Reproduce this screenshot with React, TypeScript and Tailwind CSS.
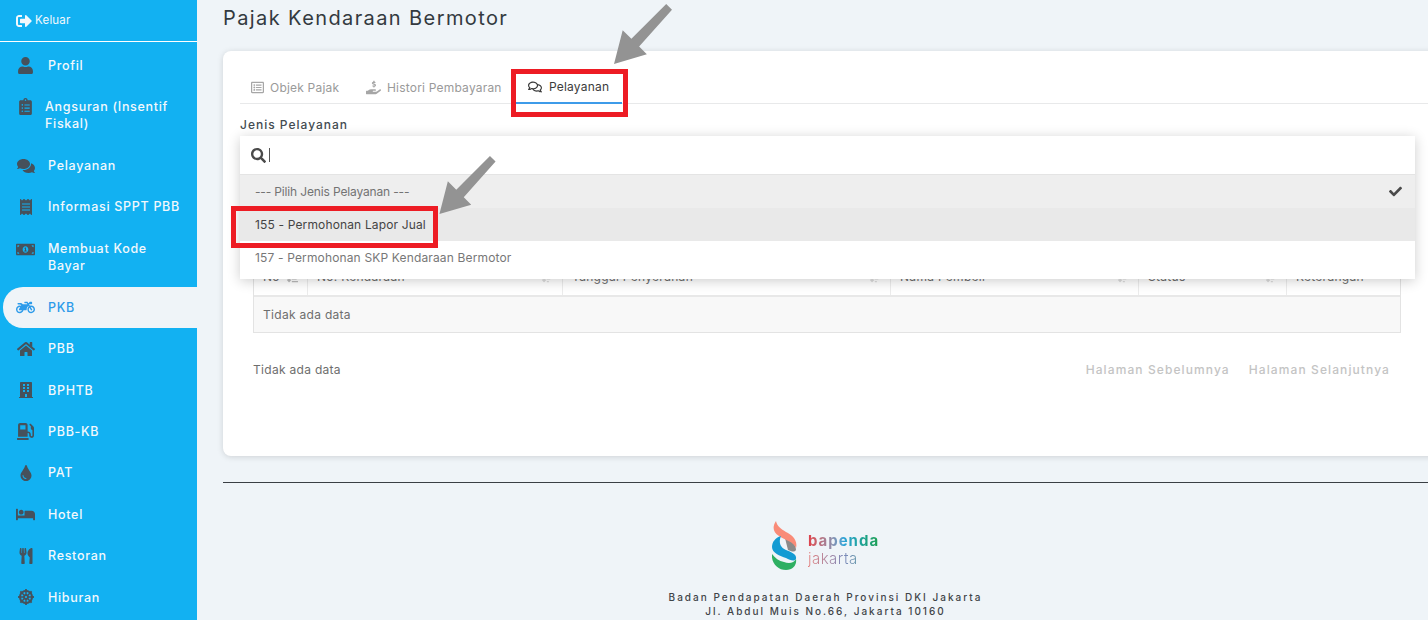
import {
  FaSignOutAlt,
  FaUser,
  FaClipboardList,
  FaComments,
  FaReceipt,
  FaMoneyBillAlt,
  FaMotorcycle,
  FaHome,
  FaBuilding,
  FaGasPump,
  FaTint,
  FaBed,
  FaUtensils,
  FaDharmachakra,
  FaRegListAlt,
  FaHandHoldingUsd,
  FaRegComments,
  FaSearch,
  FaCheck,
  FaSortAmountDownAlt,
  FaSortAmountDown,
} from 'react-icons/fa';

const menu = [
  { label: 'Profil', icon: FaUser, size: 17 },
  { label: 'Angsuran (Insentif Fiskal)', icon: FaClipboardList, size: 17, tall: true, nudge: true },
  { label: 'Pelayanan', icon: FaComments, size: 18 },
  { label: 'Informasi SPPT PBB', icon: FaReceipt, size: 16 },
  { label: 'Membuat Kode Bayar', icon: FaMoneyBillAlt, size: 19, tall: true },
  { label: 'PKB', icon: FaMotorcycle, size: 19, active: true },
  { label: 'PBB', icon: FaHome, size: 18 },
  { label: 'BPHTB', icon: FaBuilding, size: 16 },
  { label: 'PBB-KB', icon: FaGasPump, size: 17 },
  { label: 'PAT', icon: FaTint, size: 16 },
  { label: 'Hotel', icon: FaBed, size: 19 },
  { label: 'Restoran', icon: FaUtensils, size: 16 },
  { label: 'Hiburan', icon: FaDharmachakra, size: 16 },
];

const columns = [
  { label: 'No', w: 'w-[54px]', first: true },
  { label: 'No. Kendaraan', w: 'w-[255px]' },
  { label: 'Tanggal Penyerahan', w: 'w-[328px]' },
  { label: 'Nama Pembeli', w: 'w-[248px]' },
  { label: 'Status', w: 'w-[148px]' },
  { label: 'Keterangan', w: 'flex-1' },
];

function Arrow({ className }: { className: string }) {
  return (
    <svg className={className} viewBox="0 0 60 62" fill="#939393">
      <path d="M54 0 L60 6 L26 44 L34 52 L0 62 L9 27 L18 36 Z" />
    </svg>
  );
}

function Sidebar() {
  return (
    <aside className="w-[197px] h-full shrink-0 bg-[#12b1f2] text-[#f2f8fc]">
      <div className="h-[42px] pl-4 flex items-center gap-[3px] border-b border-white text-[11.5px] tracking-[0.2px]">
        <FaSignOutAlt size={16} />
        <span>Keluar</span>
      </div>
      <nav className="pt-[2.5px]">
        {menu.map((m) => {
          const Icon = m.icon;
          return (
            <div
              key={m.label}
              className={`${m.tall ? 'h-[59px]' : 'h-[41.4px]'} flex items-center ml-[3px] rounded-l-[20px] ${m.active ? 'bg-[#eff4f8] text-[#2d9bea]' : ''}`}
            >
              <div
                className={`w-[45px] flex justify-center shrink-0 ${m.tall ? 'self-start mt-[12px]' : ''} ${m.active ? 'text-[#2d9bea]' : 'text-[#46515b]'}`}
              >
                <Icon size={m.size} />
              </div>
              <span className={`max-w-[136px] text-[12.5px] font-medium tracking-[0.7px] leading-[17px] ${m.nudge ? '-ml-[3px]' : ''}`}>
                {m.label}
              </span>
            </div>
          );
        })}
      </nav>
    </aside>
  );
}

function Tabs() {
  return (
    <div className="flex h-[38px] border-b border-[#e8e9ea] text-[12px] tracking-[0.2px] text-[#9a9a9a]">
      <div className="flex items-center gap-[6px] pt-[6px] pl-[11px] w-[114px]">
        <FaRegListAlt size={13} className="text-[#a6a6a6]" />
        <span>Objek Pajak</span>
      </div>
      <div className="flex items-center gap-[6px] pt-[6px] pl-[12px] w-[162px]">
        <FaHandHoldingUsd size={15} className="text-[#a6a6a6]" />
        <span>Histori Pembayaran</span>
      </div>
      <div className="flex items-center gap-[7px] pt-[6px] pl-[12px] w-[106px] border-b-2 border-[#3d9be9] h-[38px] text-[#3c3c3c]">
        <FaRegComments size={14} />
        <span>Pelayanan</span>
      </div>
    </div>
  );
}

function Table() {
  return (
    <div className="border border-[#e3e3e3] ml-[13px] w-[1148px] text-[12px] tracking-[0.3px] text-[#6e6e6e]">
      <div className="flex h-[40px] border-b-2 border-[#e8e8e8]">
        {columns.map((c) => (
          <div key={c.label} className={`${c.w} flex items-center justify-between pt-[2px] px-[9px] border-r border-[#ececec] last:border-r-0`}>
            <span>{c.label}</span>
            {c.first ? (
              <FaSortAmountDownAlt size={11} className="text-[#bbbbbb]" />
            ) : c.label !== 'Keterangan' ? (
              <FaSortAmountDown size={11} className="text-[#dddddd]" />
            ) : null}
          </div>
        ))}
      </div>
      <div className="h-[35px] pl-[9px] flex items-center bg-[#f8f8f8]">Tidak ada data</div>
    </div>
  );
}

function Dropdown() {
  return (
    <div className="absolute left-[17px] top-[85px] w-[1175px] bg-white shadow-[0_2px_12px_rgba(0,0,0,0.2)] text-[12px] tracking-[0.15px] z-10">
      <div className="h-[39px] flex items-center pl-[11px] gap-[3px] border-b border-[#e4e4e4]">
        <FaSearch size={15} className="text-[#4a4a4a]" />
        <div className="w-px h-[14px] bg-[#555555]" />
      </div>
      <div className="h-[33px] flex items-center justify-between pl-[15px] pr-[13px] bg-[#eeeeee] text-[#737373]">
        <span className="tracking-[-0.15px]">--- Pilih Jenis Pelayanan ---</span>
        <FaCheck size={13} className="text-[#4a4a4a]" />
      </div>
      <div className="h-[33px] flex items-center pl-[15px] bg-[#e9e9e9] text-[#444444]">155 - Permohonan Lapor Jual</div>
      <div className="h-[38px] pb-[4px] flex items-center pl-[15px] text-[#777777]">157 - Permohonan SKP Kendaraan Bermotor</div>
    </div>
  );
}

function BapendaLogo() {
  return (
    <div className="flex items-center gap-[11px] h-[49px]">
      <svg width="25" height="49" viewBox="0 0 25 49">
        <path d="M13 17 C19 19 24 23 24 29 C22 32 19 30 16 29 Z" fill="#8a8a8a" />
        <path d="M4 0 C0 6 1 11 7 15 C13 19 22 21 24 27 C26 19 20 14 14 11 C9 8 5 5 4 0 Z" fill="#f98b78" />
        <path d="M9 15 C3 17 0 21 0 26 C0 32 8 35 14 37 C18 39 22 41 24 38 C25 33 19 31 14 29 C9 27 6 22 9 15 Z" fill="#139bd3" />
        <path d="M0 33 C-1 42 6 49 14 49 C21 49 25 44 24 38 C22 42 17 43 12 41 C7 40 3 37 0 33 Z" fill="#2eaf62" />
      </svg>
      <div className="flex flex-col leading-[18px] pt-[9px]">
        <span className="text-[15px] font-bold tracking-[1px] bg-linear-to-r from-[#e03c48] via-[#2ea3d8] to-[#1f9e4d] bg-clip-text text-transparent">
          bapenda
        </span>
        <span className="text-[15px] font-light tracking-[0.5px] bg-linear-to-r from-[#e4807e] via-[#7a86b8] to-[#3fb89c] bg-clip-text text-transparent">
          jakarta
        </span>
      </div>
    </div>
  );
}

export default function App() {
  return (
    <div className="relative flex h-[620px] w-[1428px] overflow-hidden bg-[#eff4f8] font-['Inter','Liberation_Sans',sans-serif]">
      <Sidebar />
      <main className="flex-1 min-w-0 pl-[26px]">
        <h1 className="h-[51px] pt-[5px] text-[20px] leading-[27px] tracking-[1.4px] text-[#333a40]">Pajak Kendaraan Bermotor</h1>
        <div className="relative h-[405px] w-[1240px] bg-white rounded-[8px] shadow-[0_1px_6px_rgba(0,0,0,0.14)] pt-[15px] pl-[17px]">
          <Tabs />
          <div className="pt-[12px] h-[152px] text-[12px] font-medium tracking-[1px] text-[#444c52]">Jenis Pelayanan</div>
          <Dropdown />
          <Table />
          <div className="flex justify-between items-center mt-[28px] ml-[13px] w-[1137px] text-[12px] tracking-[1.1px]">
            <span className="text-[#6e6e6e] tracking-[0.3px]">Tidak ada data</span>
            <div className="flex gap-[19px] text-[#c4c4c4] font-medium">
              <span>Halaman Sebelumnya</span>
              <span>Halaman Selanjutnya</span>
            </div>
          </div>
        </div>
        <div className="mt-[26px] h-px bg-[#3a3f44]" />
        <div className="flex flex-col items-center pt-[38px]">
          <BapendaLogo />
          <p className="mt-[20px] text-[10px] leading-[14px] tracking-[2px] text-center text-[#3f4448] font-medium">
            Badan Pendapatan Daerah Provinsi DKI Jakarta
            <br />
            Jl. Abdul Muis No.66, Jakarta 10160
          </p>
        </div>
      </main>

      {/* annotations */}
      <div className="absolute left-[511px] top-[69px] w-[117px] h-[48px] border-[5px] border-[#ed1c24] z-20" />
      <div className="absolute left-[231px] top-[206px] w-[207px] h-[42px] border-[5px] border-[#ed1c24] z-20" />
      <Arrow className="absolute left-[614px] top-[4px] w-[58px] h-[60px] z-20" />
      <Arrow className="absolute left-[439px] top-[156px] w-[57px] h-[58px] z-20" />
    </div>
  );
}
